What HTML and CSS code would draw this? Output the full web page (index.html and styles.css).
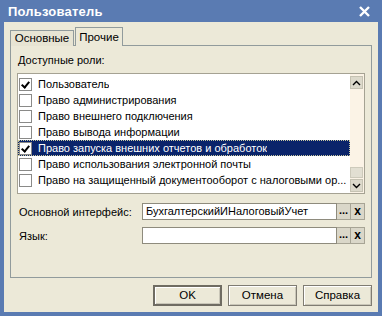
FILE: index.html
```html
<!DOCTYPE html>
<html lang="ru">

<head>
    <meta charset="UTF-8">
    <meta name="viewport" content="width=device-width, initial-scale=1.0">
    <title>Пользователь</title>
    <link rel="stylesheet" href="styles.css">
</head>

<body>
    <div class="window">
        <div class="titlebar">
            <span class="title">Пользователь</span>
            <svg class="close" width="11" height="11" viewBox="0 0 11 11">
                <path d="M1 1 L10 10 M10 1 L1 10" stroke="#fff" stroke-width="2.4" />
            </svg>
        </div>

        <div class="client">
            <div class="tabs">
                <div class="tab">Основные</div>
                <div class="tab active">Прочие</div>
            </div>

            <div class="panel">
                <div class="caption">Доступные роли:</div>

                <div class="listbox">
                    <div class="rows">
                        <div class="row"><span class="check on"></span><span class="text">Пользователь</span></div>
                        <div class="row"><span class="check"></span><span class="text">Право администрирования</span></div>
                        <div class="row"><span class="check"></span><span class="text">Право внешнего подключения</span></div>
                        <div class="row"><span class="check"></span><span class="text">Право вывода информации</span></div>
                        <div class="row selected"><span class="check on"></span><span class="text">Право запуска внешних отчетов и обработок</span></div>
                        <div class="row"><span class="check"></span><span class="text">Право использования электронной почты</span></div>
                        <div class="row"><span class="check"></span><span class="text">Право на защищенный документооборот с налоговыми ор...</span></div>
                    </div>
                    <div class="scrollbar">
                        <div class="sbtn">
                            <svg width="9" height="6" viewBox="0 0 9 6"><path d="M1 5 L4.5 1.5 L8 5" stroke="#000" stroke-width="1.4" fill="none" /></svg>
                        </div>
                        <div class="track"></div>
                        <div class="thumb"></div>
                        <div class="sbtn">
                            <svg width="9" height="6" viewBox="0 0 9 6"><path d="M1 1 L4.5 4.5 L8 1" stroke="#000" stroke-width="1.4" fill="none" /></svg>
                        </div>
                    </div>
                </div>

                <div class="field">
                    <label>Основной интерфейс:</label>
                    <div class="input">БухгалтерскийИНалоговыйУчет</div>
                    <div class="mini">...</div>
                    <div class="mini x">x</div>
                </div>
                <div class="field">
                    <label>Язык:</label>
                    <div class="input"></div>
                    <div class="mini">...</div>
                    <div class="mini x">x</div>
                </div>
            </div>

            <div class="buttons">
                <div class="btn default">OK</div>
                <div class="btn">Отмена</div>
                <div class="btn">Справка</div>
            </div>
        </div>
    </div>
</body>

</html>
```

FILE: styles.css
```css
body {
    margin: 0;
    font-family: "Liberation Sans", Arial, sans-serif;
    font-size: 11px;
    color: #000;
}

.window {
    width: 382px;
    height: 316px;
    box-sizing: border-box;
    background: #5a7bb2;
    padding: 0 4px 4px 4px;
    display: flex;
    flex-direction: column;
}

.titlebar {
    height: 22px;
    display: flex;
    align-items: center;
    justify-content: space-between;
    padding: 0 8px 0 4px;
}

.title {
    color: #fff;
    font-weight: bold;
    font-size: 13px;
    letter-spacing: 0.2px;
}

.client {
    flex: 1;
    background: #ece9d8;
    padding: 6px 6px 0 6px;
    display: flex;
    flex-direction: column;
}

/* вкладки */
.tabs {
    display: flex;
    align-items: flex-end;
    height: 18px;
    margin-bottom: -1px;
    position: relative;
    z-index: 1;
}

.tab {
    height: 16px;
    line-height: 15px;
    width: 64px;
    text-align: center;
    border: 1px solid #919b9c;
    border-bottom: none;
    background: #e7e4d3;
    box-sizing: border-box;
    font-size: 11.5px;
}

.tab.active {
    height: 19px;
    line-height: 19px;
    width: 48px;
    background: #ece9d8;
    margin-left: 1px;
}

.panel {
    height: 233px;
    box-sizing: border-box;
    border: 1px solid #919b9c;
    padding: 8px 6px 0 6px;
}

.caption {
    height: 19px;
    padding-left: 1px;
}

.listbox {
    height: 121px;
    box-sizing: border-box;
    border: 1px solid #a5a293;
    background: #fff;
    display: flex;
}

.rows {
    flex: 1;
    min-width: 0;
    padding-top: 2px;
    overflow: hidden;
}

.row {
    height: 16px;
    display: flex;
    align-items: center;
    white-space: nowrap;
    box-sizing: border-box;
}

.row .text {
    overflow: hidden;
    text-overflow: ellipsis;
}

.row.selected {
    background: #0a246a;
    color: #fff;
    outline: 1px dotted #c8c8a0;
    outline-offset: -1px;
}

.check {
    width: 13px;
    height: 13px;
    box-sizing: border-box;
    border: 1px solid #8a8a88;
    background: #fff;
    margin: 0 6px 0 1px;
    position: relative;
    flex: none;
}

.check.on::after {
    content: "";
    position: absolute;
    left: 3px;
    top: 1px;
    width: 3px;
    height: 6px;
    border: solid #000;
    border-width: 0 2px 2px 0;
    transform: rotate(40deg);
}

.scrollbar {
    width: 14px;
    flex: none;
    background: #fbf3e6;
    display: flex;
    flex-direction: column;
    padding: 2px 1px 1px 0;
    box-sizing: border-box;
}

.sbtn {
    height: 11px;
    background: #dcd9cb;
    border: 1px solid #c5c2b2;
    display: flex;
    align-items: center;
    justify-content: center;
}

.track {
    flex: 1;
}

.thumb {
    height: 9px;
    background: #e2dfd2;
    border: 1px solid #cdcabb;
    margin-bottom: 1px;
}

/* поля */
.field {
    display: flex;
    align-items: center;
    height: 17px;
    margin-top: 9px;
}

.field + .field {
    margin-top: 7px;
}

.field label {
    width: 123px;
    padding-left: 2px;
}

.input {
    flex: 1;
    height: 17px;
    box-sizing: border-box;
    border: 1px solid #8e8b7d;
    background: #fff;
    padding-left: 3px;
    line-height: 15px;
}

.mini {
    width: 14px;
    height: 17px;
    box-sizing: border-box;
    background: #dad7c9;
    border: 1px solid #a7a495;
    border-left: none;
    text-align: center;
    line-height: 13px;
    font-weight: bold;
}

.mini.x {
    font-size: 12px;
    line-height: 14px;
}

/* кнопки */
.buttons {
    display: flex;
    justify-content: flex-end;
    gap: 6px;
    padding-top: 7px;
}

.btn {
    width: 69px;
    height: 21px;
    box-sizing: border-box;
    border: 1px solid #7f7c72;
    background: #ece9d8;
    box-shadow: inset 1px 1px 0 #fff, inset -1px -1px 0 #c9c6b8;
    text-align: center;
    line-height: 19px;
    font-size: 11.5px;
}

.btn.default {
    border: 2px solid #6f6c62;
    line-height: 17px;
}
```
